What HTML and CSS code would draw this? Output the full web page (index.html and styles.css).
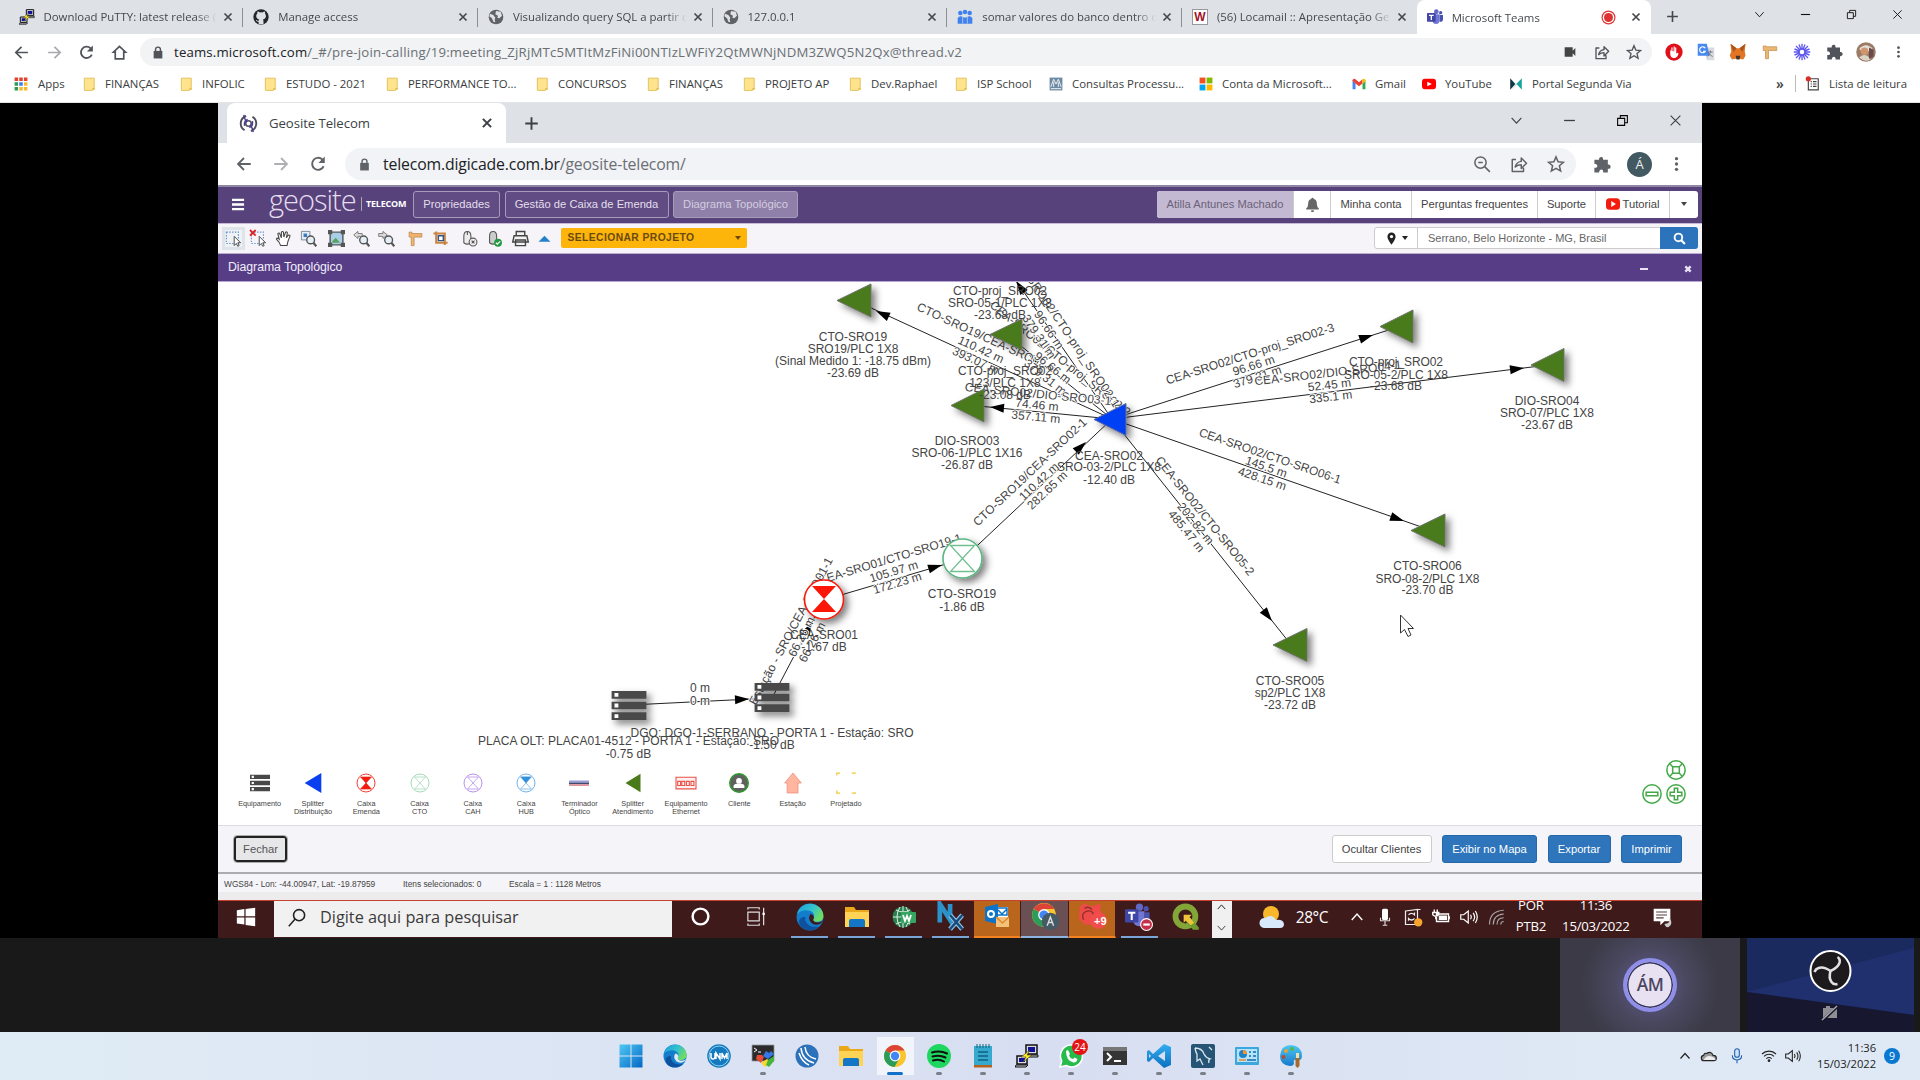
FILE: index.html
```html
<!DOCTYPE html>
<html lang="pt-BR">
<head>
<meta charset="utf-8">
<title>Microsoft Teams</title>
<link rel="stylesheet" href="styles.css">
</head>
<body>
<svg class="defs" aria-hidden="true">
<defs>
<linearGradient id="gWin" x1="0" y1="0" x2="1" y2="1"><stop offset="0" stop-color="#4fc8f5"/><stop offset="1" stop-color="#0467c4"/></linearGradient>
<linearGradient id="gEdge" x1="0" y1="0" x2="1" y2=".5"><stop offset="0" stop-color="#1b9de2"/><stop offset=".6" stop-color="#35c3c9"/><stop offset="1" stop-color="#6fdc62"/></linearGradient>
<linearGradient id="gCode" x1="0" y1="0" x2="0" y2="1"><stop offset="0" stop-color="#35aef0"/><stop offset="1" stop-color="#0b6fc0"/></linearGradient>
<linearGradient id="gPaint" x1="0" y1="0" x2="0" y2="1"><stop offset="0" stop-color="#4cc8f4"/><stop offset="1" stop-color="#1679c9"/></linearGradient>
<filter id="shadow" x="-40%" y="-40%" width="200%" height="200%"><feDropShadow dx="4" dy="4" stdDeviation="3.5" flood-opacity=".5"/></filter>
</defs>
<symbol id="x" viewBox="0 0 24 24"><path d="M5 5l14 14M19 5L5 19" fill="none" stroke="currentColor" stroke-width="3.4"/></symbol>
<symbol id="xthin" viewBox="0 0 24 24"><path d="M3 3l18 18M21 3L3 21" fill="none" stroke="currentColor" stroke-width="2"/></symbol>
<symbol id="plus" viewBox="0 0 24 24"><path d="M12 2v20M2 12h20" fill="none" stroke="currentColor" stroke-width="3"/></symbol>
<symbol id="minus" viewBox="0 0 24 24"><path d="M2 12h20" fill="none" stroke="currentColor" stroke-width="2.4"/></symbol>
<symbol id="restore" viewBox="0 0 24 24"><path d="M3 8h13v13H3zM8 8V3h13v13h-5" fill="none" stroke="currentColor" stroke-width="2"/></symbol>
<symbol id="down" viewBox="0 0 24 24"><path d="M3 7l9 10 9-10" fill="none" stroke="currentColor" stroke-width="2"/></symbol>
<symbol id="up" viewBox="0 0 24 24"><path d="M3 17l9-10 9 10" fill="none" stroke="currentColor" stroke-width="2.4"/></symbol>
<symbol id="back" viewBox="0 0 24 24"><path d="M21 12H4M12 4l-8 8 8 8" fill="none" stroke="currentColor" stroke-width="2.4"/></symbol>
<symbol id="fwd" viewBox="0 0 24 24"><path d="M3 12h17M12 4l8 8-8 8" fill="none" stroke="currentColor" stroke-width="2.4"/></symbol>
<symbol id="reload" viewBox="0 0 24 24"><path d="M19.5 15a8 8 0 1 1-1.8-9" fill="none" stroke="currentColor" stroke-width="2.6"/><path d="M21 2v8.500h-8.500z" fill="currentColor"/></symbol>
<symbol id="home" viewBox="0 0 24 24"><path d="M12 3.500L3.500 11.500H6V21h12v-9.500h2.500z" fill="none" stroke="currentColor" stroke-width="2.4"/></symbol>
<symbol id="lock" viewBox="0 0 24 24"><path d="M4 9h16v14H4z" fill="currentColor"/><path d="M7.500 10V6.500a4.500 4.500 0 0 1 9 0V10" fill="none" stroke="currentColor" stroke-width="2.600"/></symbol>
<symbol id="share" viewBox="0 0 24 24"><path d="M8 6H3v16h15v-5M7 16c1-5 4-7 8-7.500V4l7 7-7 7v-5c-4 0-6 1-8 3z" fill="none" stroke="currentColor" stroke-width="2" stroke-linejoin="round"/></symbol>
<symbol id="star" viewBox="0 0 24 24"><path d="M12 2.500l2.800 6.600 7.200.6-5.500 4.700 1.700 7L12 17.700l-6.200 3.700 1.700-7L2 9.700l7.200-.6z" fill="none" stroke="currentColor" stroke-width="2"/></symbol>
<symbol id="puzzle" viewBox="0 0 24 24"><path d="M3 6h6c-1-4 5-5 5-1v1h6v6c4-1 5 5 1 5.500h-1V22h-6c1-5-5-5-5 0H3v-6c5 1 5-5 0-5z" fill="currentColor"/></symbol>
<symbol id="dots" viewBox="0 0 24 24"><g fill="currentColor"><circle cx="12" cy="4" r="2.500"/><circle cx="12" cy="12" r="2.500"/><circle cx="12" cy="20" r="2.500"/></g></symbol>
<symbol id="globe" viewBox="0 0 24 24"><circle cx="12" cy="12" r="11" fill="#5f6368"/><path d="M3 7l5 2 3 4-1 3 1 4-3-1-2-5-4-3zM12 3l7 1 2 6-4 4-3-1 1-3-4-2z" fill="#dfe1e5"/></symbol>
<symbol id="folder" viewBox="0 0 24 24"><path d="M4 2h17v16l-2 1-1 4H4z" fill="#ffe38d" stroke="#dfbd55" stroke-width="1.500"/><path d="M19 19h3v3h-4z" fill="#e3b93d"/></symbol>
<symbol id="glass" viewBox="0 0 24 24"><circle cx="14" cy="9" r="7" fill="none" stroke="currentColor" stroke-width="2"/><path d="M9 14l-8 9" stroke="currentColor" stroke-width="2"/></symbol>
<symbol id="putty" viewBox="0 0 24 24"><path d="M11 1h11v9H11zM2 12h10v8H2z" fill="#ddd" stroke="#111" stroke-width="1.500"/><path d="M13 3h7v5h-7zM4 14h6v4H4z" fill="#10129b"/><path d="M1 21h12l-2 2H0zM11 11h12v2H12z" fill="#ccc" stroke="#111"/><path d="M15 6L6 13h5l-3 5 9-7h-5z" fill="#ffec20" stroke="#333" stroke-width=".6"/></symbol>
<symbol id="teams" viewBox="0 0 24 24"><circle cx="14" cy="4" r="3.500" fill="#6169c6"/><circle cx="20.500" cy="5.500" r="2.500" fill="#4a51b0"/><path d="M8 8h11v9a5.500 5.500 0 0 1-11 0z" fill="#7078d4"/><path d="M19 9h5v7a4 4 0 0 1-5 3z" fill="#4a51b0"/><rect x="0" y="6" width="13" height="13" rx="1" fill="#3f46a5"/><path d="M3 9.500h7M6.500 9.500v7" stroke="#fff" stroke-width="2"/></symbol>
<symbol id="edge" viewBox="0 0 24 24"><circle cx="12" cy="12" r="11.500" fill="#137dcc"/><path d="M1 9C3 2 9 0 14 .8c6 .9 10 6 9.500 11-.4 4-5 5-8 4-2-.8-1-2 0-4 1-5-8-8-14-2.800z" fill="url(#gEdge)"/><path d="M8 12c-1 5 4 10 12 8-4 4-11 4.500-15 1-4-4-3-9 3-9z" fill="#0e519f"/><path d="M12.500 9.500c3 .8 3.500 3 2.200 5 1.500 3 5.500 2.500 8.500.5-2 4-7.500 5-10.500 1.500-2-2.300-2-5-.2-7z" fill="#dfe9f5"/></symbol>
<symbol id="edgedark" viewBox="0 0 24 24"><circle cx="12" cy="12" r="11.500" fill="#137dcc"/><path d="M1 9C3 2 9 0 14 .8c6 .9 10 6 9.500 11-.4 4-5 5-8 4-2-.8-1-2 0-4 1-5-8-8-14-2.800z" fill="url(#gEdge)"/><path d="M8 12c-1 5 4 10 12 8-4 4-11 4.500-15 1-4-4-3-9 3-9z" fill="#0e519f"/><path d="M12.500 9.500c3 .8 3.500 3 2.200 5 1.500 3 5.500 2.500 8.500.5-2 4-7.500 5-10.500 1.500-2-2.300-2-5-.2-7z" fill="#3f1a1b"/></symbol>
<symbol id="chrome" viewBox="0 0 24 24"><circle cx="12" cy="12" r="11" fill="#fbc52d"/><path d="M12 12L2.500 6.500A11 11 0 0 1 21.500 6.500H12z" fill="#db4437"/><path d="M12 12L2.500 6.500A11 11 0 0 0 11.500 23L16 15z" fill="#2a9d58"/><circle cx="12" cy="12" r="5.400" fill="#fff"/><circle cx="12" cy="12" r="4.200" fill="#4285f4"/></symbol>
<symbol id="explorer" viewBox="0 0 24 24"><path d="M0 2h9l2 3h13v17H0z" fill="#e9a91b"/><path d="M0 7h24v15H0z" fill="#ffd355"/><path d="M4 22v-6a2 2 0 0 1 2-2h12a2 2 0 0 1 2 2v6z" fill="#1476c6"/></symbol>
<symbol id="win11" viewBox="0 0 24 24"><path d="M.5.500h11v11H.5zM12.500.500h11v11h-11zM.5 12.500h11v11H.5zM12.500 12.500h11v11h-11z" fill="url(#gWin)"/></symbol>
<symbol id="hour" viewBox="0 0 24 24"><circle cx="12" cy="12" r="10.800" fill="#fff" stroke="currentColor" stroke-width="1"/><path d="M5.500 4.800h13L12 12zM5.500 19.200h13L12 12z" stroke="currentColor" stroke-width=".8"/></symbol>
<symbol id="rack" viewBox="0 0 36 30"><g fill="#484848"><path d="M0 0h36v8H0zM0 11h36v8H0zM0 22h36v8H0z"/></g><path d="M3 2h4v4H3zM3 13h4v4H3zM3 24h4v4H3z" fill="#fff"/></symbol>
<symbol id="wifi" viewBox="0 0 24 24"><g fill="none" stroke="currentColor" stroke-width="1.700"><path d="M1.500 9a15 15 0 0 1 21 0M4.500 12.500a10.500 10.500 0 0 1 15 0M8 16a6 6 0 0 1 8 0"/></g><circle cx="12" cy="19" r="2" fill="currentColor"/></symbol>
<symbol id="sound" viewBox="0 0 24 24"><path d="M1 9h4l6-5v16l-6-5H1zM14 9q2 3 0 6M17.500 6.500q4 5.500 0 11M20.500 4q5 8 0 16" fill="none" stroke="currentColor" stroke-width="1.600"/></symbol>
<symbol id="sel" viewBox="0 0 24 24"><path d="M2 3h17v16H2z" fill="none" stroke="#5c93cb" stroke-width="1.600" stroke-dasharray="2 2"/><path d="M13 9v13l3-3 2 4 2-1-2-4h4z" fill="#fff" stroke="#444" stroke-width="1.300"/></symbol>
<symbol id="mag" viewBox="0 0 24 24"><circle cx="15" cy="14" r="5.500" fill="#e4f0f8" stroke="#555" stroke-width="2"/><path d="M19 18l4 5" stroke="#555" stroke-width="3"/></symbol>
</svg>

<header class="browser">
  <div class="tabs">
    <div class="tab"><svg><use href="#putty"/></svg><span>Download PuTTY: latest release (</span><svg class="close"><use href="#x"/></svg></div>
    <div class="tab"><svg viewBox="0 0 24 24"><circle cx="12" cy="12" r="11.500" fill="#23272c"/><path d="M8.500 23v-4c-3 .5-4-2-4.500-3 2 0 2 2.500 4.500 1.500.2-1 .5-1.400 1-1.800-5-1-6-6-3-9-.4-1 0-2 .3-3 1.500.2 2.500.7 3.500 1.500q2-.5 4 0c1-.8 2-1.300 3.500-1.500.3 1 .5 2 .2 3 3 4 1 8-3.200 9 1 1 1 2 1 7.300z" fill="#dee1e6"/></svg><span>Manage access</span><svg class="close"><use href="#x"/></svg></div>
    <div class="tab"><svg><use href="#globe"/></svg><span>Visualizando query SQL a partir d</span><svg class="close"><use href="#x"/></svg></div>
    <div class="tab"><svg><use href="#globe"/></svg><span>127.0.0.1</span><svg class="close"><use href="#x"/></svg></div>
    <div class="tab"><svg viewBox="0 0 24 24"><g fill="#3f82ee"><circle cx="5" cy="6" r="3.400"/><circle cx="12" cy="4.500" r="3.400"/><circle cx="19" cy="6" r="3.400"/><path d="M1 22v-8q2-4 5-3l6 2 6-2q3-1 5 3v8z"/></g><path d="M8.500 12v10M15.500 12v10" stroke="#dee1e6"/></svg><span>somar valores do banco dentro d</span><svg class="close"><use href="#x"/></svg></div>
    <div class="tab"><i class="fav-w">W</i><span>(56) Locamail :: Apresentação Ge</span><svg class="close"><use href="#x"/></svg></div>
    <div class="tab active"><svg><use href="#teams"/></svg><span>Microsoft Teams</span><i class="rec"></i><svg class="close"><use href="#x"/></svg></div>
    <svg class="newtab"><use href="#plus"/></svg>
    <div class="winctl"><svg><use href="#down"/></svg><svg><use href="#minus"/></svg><svg><use href="#restore"/></svg><svg><use href="#xthin"/></svg></div>
  </div>
  <div class="addr">
    <div class="nav"><svg><use href="#back"/></svg><svg class="dim"><use href="#fwd"/></svg><svg><use href="#reload"/></svg><svg><use href="#home"/></svg></div>
    <div class="omni"><svg class="lock"><use href="#lock"/></svg><p>teams.microsoft.com<span>/_#/pre-join-calling/19:meeting_ZjRjMTc5MTItMzFiNi00NTIzLWFiY2QtMWNjNDM3ZWQ5N2Qx@thread.v2</span></p>
      <svg viewBox="0 0 24 24"><path d="M4 5h12v5l4-4v12l-4-4v5H4z" fill="#444"/></svg><svg><use href="#share"/></svg><svg><use href="#star"/></svg></div>
    <div class="ext">
      <svg viewBox="0 0 24 24"><circle cx="12" cy="12" r="11.500" fill="#e0101b"/><path d="M7 9v6q0 4 4 5h2q4-1 5-6l-1-1-2 1V6h-1.500v5H13V4.500h-1.500V11H10V6H8.500v5z" fill="#fff"/></svg>
      <svg viewBox="0 0 24 24"><path d="M9 6h14v17H13z" fill="#d7dade"/><path d="M1 1h12l4 16H1z" fill="#4789ef"/><path d="M11 7a4 4 0 1 0 0 4H8" fill="none" stroke="#fff" stroke-width="1.600"/><path d="M14 12h7M18 10v2q-1 4-4 6M16 14q2 3 5 4" stroke="#666" fill="none"/></svg>
      <svg viewBox="0 0 24 24"><path d="M2 1l8 6h4l8-6-1 10 1 6-3 5-5-1H9l-5 1-3-5 2-6z" fill="#e27625"/><path d="M2 1l8 6-4 5zM22 1l-8 6 4 5z" fill="#a9541d"/><path d="M9 17h6l-1 5h-4z" fill="#463328"/></svg>
      <svg viewBox="0 0 24 24"><path d="M3 4h4v1h14v5H10v11H6V10H3z" fill="#eab676" stroke="#c78f4c"/></svg>
      <svg viewBox="0 0 24 24"><path d="M12 1v22M1 12h22M4 4l16 16M20 4L4 20M8 2l8 20M2 8l20 8M2 16l20-8M8 22l8-20" stroke="#5f57ee" stroke-width="1.800"/><circle cx="12" cy="12" r="4" fill="#fff" stroke="#5f57ee" stroke-width="2"/></svg>
      <svg class="gray"><use href="#puzzle"/></svg>
      <svg class="me" viewBox="0 0 24 24"><circle cx="12" cy="12" r="13" fill="#9c7c66"/><path d="M3 8q9-10 18 0l-3 3H6z" fill="#e5e2dc"/><circle cx="10" cy="11" r="5" fill="#cf9670"/><path d="M3 19q7-6 13 0l2 3q-8 4-14-2z" fill="#d8d4c8"/><path d="M16 6l6 3v9l-6 3z" fill="#6c4a4a"/></svg>
      <svg class="gray"><use href="#dots"/></svg>
    </div>
  </div>
  <div class="marks">
    <a class="m1"><svg viewBox="0 0 24 24"><path d="M1 1h6v6H1zM17 1h6v6h-6zM9 1h6v6H9z" fill="#e2412f"/><path d="M1 9h6v6H1zM1 17h6v6H1z" fill="#2d9b56"/><path d="M9 9h6v6H9z" fill="#3b7eea"/><path d="M17 9h6v6h-6zM9 17h6v6H9zM17 17h6v6h-6z" fill="#f4b92e"/></svg>Apps</a>
    <a class="m2"><svg><use href="#folder"/></svg>FINANÇAS</a>
    <a class="m3"><svg><use href="#folder"/></svg>INFOLIC</a>
    <a class="m4"><svg><use href="#folder"/></svg>ESTUDO - 2021</a>
    <a class="m5"><svg><use href="#folder"/></svg>PERFORMANCE TO...</a>
    <a class="m6"><svg><use href="#folder"/></svg>CONCURSOS</a>
    <a class="m7"><svg><use href="#folder"/></svg>FINANÇAS</a>
    <a class="m8"><svg><use href="#folder"/></svg>PROJETO AP</a>
    <a class="m9"><svg><use href="#folder"/></svg>Dev.Raphael</a>
    <a class="m10"><svg><use href="#folder"/></svg>ISP School</a>
    <a class="m11"><svg viewBox="0 0 24 24"><path d="M1 1h22v22H1z" fill="#6f8ba4"/><path d="M3 17L8 4l4 8 4-8 5 13M3 20h18M8 9v8M16 9v8" stroke="#fff" stroke-width="1.500" fill="none"/></svg>Consultas Processu...</a>
    <a class="m12"><svg viewBox="0 0 24 24"><path d="M1 1h10v10H1z" fill="#f25022"/><path d="M13 1h10v10H13z" fill="#7fba00"/><path d="M1 13h10v10H1z" fill="#00a4ef"/><path d="M13 13h10v10H13z" fill="#ffb900"/></svg>Conta da Microsoft...</a>
    <a class="m13"><svg viewBox="0 0 24 24"><path d="M1 5v16h5V11z" fill="#4285f4"/><path d="M23 5v16h-5V11z" fill="#34a853"/><path d="M1 5q2-3 5-1l6 5 6-5v7l-6 5-6-5-5-4z" fill="#ea4335"/><path d="M18 4q3-2 5 1v3l-5 3z" fill="#fbbc04"/></svg>Gmail</a>
    <a class="m14"><svg viewBox="0 0 24 24"><rect x="0" y="3" width="24" height="18" rx="5" fill="#f00"/><path d="M9 8v8l8-4z" fill="#fff"/></svg>YouTube</a>
    <a class="m15"><svg viewBox="0 0 24 24"><path d="M2 2l9 10-9 10z" fill="#143945"/><path d="M22 2v20l-9-10z" fill="#18a49a"/><path d="M5 22l17-20-9 10z" fill="#0c6a78"/></svg>Portal Segunda Via</a>
    <b>»</b>
    <a class="reading"><svg viewBox="0 0 24 24"><path d="M4 3h17v19H4zM8 8h2M12 8h6M8 12h2M12 12h6M8 16h2M12 16h6" fill="none" stroke="#444" stroke-width="2"/><circle cx="4" cy="3" r="4.500" fill="#d93025"/></svg>Lista de leitura</a>
  </div>
</header>

<main class="stage">
<section class="shared">
  <div class="itabs">
    <div class="itab"><svg viewBox="0 0 24 24"><path d="M9 2.500a10 10 0 0 0-2 18M15 21.500a10 10 0 0 0 2-18" fill="none" stroke="#4f4d5e" stroke-width="2.400"/><circle cx="12" cy="12" r="3.500" fill="none" stroke="#55516c" stroke-width="2"/><path d="M6 1q1 6 4 9M18 23q-1-6-4-9M7 15q-1-7 4-8M17 9q1 7-4 8" stroke="#4b3e8e" stroke-width="1.800" fill="none"/></svg><span>Geosite Telecom</span><svg class="close"><use href="#x"/></svg></div>
    <svg class="newtab"><use href="#plus"/></svg>
    <div class="iwin"><svg><use href="#down"/></svg><svg><use href="#minus"/></svg><svg class="blk"><use href="#restore"/></svg><svg><use href="#xthin"/></svg></div>
  </div>
  <div class="iaddr">
    <div class="inav"><svg><use href="#back"/></svg><svg class="dim"><use href="#fwd"/></svg><svg><use href="#reload"/></svg></div>
    <div class="iomni"><svg class="lock"><use href="#lock"/></svg><p>telecom.digicade.com.br<span>/geosite-telecom/</span></p>
      <svg viewBox="0 0 24 24"><circle cx="10" cy="10" r="7.500" fill="none" stroke="currentColor" stroke-width="2"/><path d="M15.500 15.500l7 7M7 10h6" stroke="currentColor" stroke-width="2"/></svg><svg><use href="#share"/></svg><svg><use href="#star"/></svg></div>
    <div class="iext"><svg><use href="#puzzle"/></svg><i>Á</i><svg><use href="#dots"/></svg></div>
  </div>
  <nav class="geo">
    <svg class="burger" viewBox="0 0 14 14"><path d="M0 2h13M0 7h13M0 12h13" stroke="#fff" stroke-width="2.600"/></svg>
    <div class="logo"><span>geosite</span><small>TELECOM</small></div>
    <a class="g1">Propriedades</a><a class="g2">Gestão de Caixa de Emenda</a><a class="g3">Diagrama Topológico</a>
    <div class="account">
      <span class="user">Atilla Antunes Machado</span>
      <span class="bell"><svg viewBox="0 0 24 24"><path d="M12 1q2 0 2 2 5 1 5 8 0 5 3 7v2H2v-2q3-2 3-7 0-7 5-8 0-2 2-2zM10 21h4v3h-4z" fill="#666"/></svg></span>
      <span class="a1">Minha conta</span><span class="a2">Perguntas frequentes</span><span class="a3">Suporte</span>
      <span class="a4"><svg viewBox="0 0 24 24"><rect x="0" y="2" width="24" height="20" rx="6" fill="#f31b10"/><path d="M9 7v10l8-5z" fill="#fff"/></svg>Tutorial</span>
      <span class="a5"><i class="caret"></i></span>
    </div>
  </nav>
  <div class="tools">
    <svg class="on"><use href="#sel"/></svg>
    <svg viewBox="0 0 24 24"><use href="#sel"/><path d="M0 0l8 8M8 0L0 8" stroke="#d22" stroke-width="2.500"/></svg>
    <svg viewBox="0 0 24 24"><path d="M8 22q-1-4-6-9 1-3 4 0L4 5q2-2 3 1l2 5V3q2-2 3 0l.5 7L15 3q2-1 2.500 1L16 11l3-4q3 0 2 2-2 5-3 8l-1 5z" fill="#fff" stroke="#444" stroke-width="1.500"/></svg>
    <svg viewBox="0 0 24 24"><path d="M2 2h12v12H2z" fill="#e5eef8" stroke="#567" /><path d="M5 5h5v5H5z" fill="#3b7ac0"/><use href="#mag"/></svg>
    <svg class="gap" viewBox="0 0 24 24"><path d="M3 3h18v18H3z" fill="#a9cfe8" stroke="#555" stroke-width="2"/><path d="M6 16l5-5 6 7H6z" fill="#5aa260"/><path d="M0 0h6v6H0zM18 0h6v6h-6zM0 18h6v6H0zM18 18h6v6h-6z" fill="#555"/></svg>
    <svg viewBox="0 0 24 24"><use href="#mag"/><path d="M1 7l6-5v3h6v4H7v3z" fill="#ddd" stroke="#555"/></svg>
    <svg viewBox="0 0 24 24"><use href="#mag"/><path d="M13 7L7 2v3H1v4h6v3z" fill="#ddd" stroke="#555"/></svg>
    <svg class="bar" viewBox="0 0 24 24"><path d="M3 3h4v2h14v5H10v12H6V10H3z" fill="#eeb571" stroke="#b97f40"/></svg>
    <svg viewBox="0 0 24 24"><path d="M2 5h16v16M6 2v16h16" fill="none" stroke="#c98442" stroke-width="3"/><path d="M9 8h7v7H9z" fill="#fff" stroke="#358" stroke-width="2"/></svg>
    <svg class="bar" viewBox="0 0 24 24"><path d="M4 18V9q0-7 5-7t5 7v9q-5 4-10 0zM9 2v5" fill="#ececec" stroke="#555" stroke-width="1.500"/><circle cx="17" cy="17" r="5.500" fill="#f2f2f2" stroke="#555" stroke-width="1.500"/><path d="M15 15l4 4M19 15l-4 4" stroke="#555" stroke-width="1.500"/></svg>
    <svg viewBox="0 0 24 24"><path d="M5 18V9q0-7 5-7t5 7v9q-5 4-10 0z" fill="#ccc" stroke="#555" stroke-width="1.500"/><circle cx="17" cy="18" r="5.500" fill="#249844"/><path d="M14 18l2 2 4-4" fill="none" stroke="#fff" stroke-width="1.600"/></svg>
    <svg viewBox="0 0 24 24"><path d="M6 8V2h12v6M3 8h18l2 9H1zM5 14h14v8H5z" fill="#f2f2f2" stroke="#444" stroke-width="2"/></svg>
    <svg class="tri" viewBox="0 0 24 24"><path d="M1 18L12 7l11 11z" fill="#2482cc"/></svg>
    <div class="project">SELECIONAR PROJETO<i class="caret"></i></div>
    <div class="place"><span class="pin"><svg viewBox="0 0 24 24"><path d="M12 1a7.500 7.500 0 0 1 7.500 8q0 4-7.500 14.500Q4.500 13 4.500 9A7.500 7.500 0 0 1 12 1z" fill="#222"/><circle cx="12" cy="8.500" r="3" fill="#fff"/></svg><i class="caret"></i></span><span class="where">Serrano, Belo Horizonte - MG, Brasil</span><span class="go"><svg viewBox="0 0 24 24"><circle cx="10" cy="10" r="7" fill="none" stroke="#fff" stroke-width="3.500"/><path d="M15 15l7 7" stroke="#fff" stroke-width="4"/></svg></span></div>
  </div>
  <div class="dialog-head"><span>Diagrama Topológico</span><i></i><svg viewBox="0 0 24 24"><path d="M4 4l16 16M20 4L4 20" stroke="#e9e2f5" stroke-width="7"/></svg></div>
  <div class="canvas">
    <svg class="graph" viewBox="218 282 1484 543">
      <g class="wires"><path d="M1112 419L856 301M1112 419L1006 334M1112 419L1010 272M1112 419L968 405M963 559L1112 419M1112 419L1398 327M1112 419L1548 365M1112 419L1430 530M1112 419L1292 646M824 600L963 559M630 705L772 698M772 698L824 599"/></g>
      <g class="heads">
        <path d="M0 0l-14-4.500 0 9z" transform="translate(876 311) rotate(204.700)"/>
        <path d="M0 0l-14-4.500 0 9z" transform="translate(1028 353) rotate(219)"/>
        <path d="M0 0l-14-4.500 0 9z" transform="translate(1016 281) rotate(235)"/>
        <path d="M0 0l-14-4.500 0 9z" transform="translate(990 407) rotate(185.500)"/>
        <path d="M0 0l-14-4.500 0 9z" transform="translate(1086 442) rotate(-43)"/>
        <path d="M0 0l-14-4.500 0 9z" transform="translate(1373 335) rotate(-17.900)"/>
        <path d="M0 0l-14-4.500 0 9z" transform="translate(1524 368) rotate(-7)"/>
        <path d="M0 0l-14-4.500 0 9z" transform="translate(1404 521) rotate(19.200)"/>
        <path d="M0 0l-14-4.500 0 9z" transform="translate(1272 621) rotate(51.600)"/>
        <path d="M0 0l-14-4.500 0 9z" transform="translate(942 565) rotate(-16.500)"/>
        <path d="M0 0l-14-4.500 0 9z" transform="translate(749 699) rotate(-3)"/>
        <path d="M0 0l-14-4.500 0 9z" transform="translate(812 622) rotate(-62)"/>
      </g>
      <g class="elabel">
        <g transform="translate(983 345) rotate(24.700)"><text y="-4" textLength="151">CTO-SRO19/CEA-SRO02-2</text><text y="9">110.42 m</text><text y="21">393.07 m</text></g>
        <g transform="translate(1059 360) rotate(38.700)"><text y="2" textLength="176">CEA-SRO02/CTO-proj_SRO02-2</text><text y="14">96.66 m</text><text y="26">379.31 m</text></g>
        <g transform="translate(1060 332) rotate(56)"><text y="-2" textLength="186">CEA-SRO02/CTO-proj_SRO02-1</text><text y="12" x="-8">96.66 m</text><text y="24" x="-8">379.31 m</text></g>
        <g transform="translate(1038 395) rotate(5.500)"><text y="3" textLength="147">CEA-SRO02/DIO-SRO03-1</text><text y="14">74.46 m</text><text y="26">357.11 m</text></g>
        <g transform="translate(1030 472) rotate(-43.300)"><text y="4" textLength="151">CTO-SRO19/CEA-SRO02-1</text><text y="17">110.42 m</text><text y="29">282.65 m</text></g>
        <g transform="translate(1250 354) rotate(-17.700)"><text y="4" textLength="176">CEA-SRO02/CTO-proj_SRO02-3</text><text y="16">96.66 m</text><text y="28">379.31 m</text></g>
        <g transform="translate(1328 373) rotate(-6.500)"><text y="4" textLength="148">CEA-SRO02/DIO-SRO04-1</text><text y="16">52.45 m</text><text y="28">335.1 m</text></g>
        <g transform="translate(1270 456) rotate(18.800)"><text y="4" textLength="149">CEA-SRO02/CTO-SRO06-1</text><text y="15.500">145.5 m</text><text y="28">428.15 m</text></g>
        <g transform="translate(1205 516) rotate(51)"><text y="4" textLength="149">CEA-SRO02/CTO-SRO05-2</text><text y="16">202.82 m</text><text y="28">485.47 m</text></g>
        <g transform="translate(890 559) rotate(-16.800)"><text y="4" textLength="149">CEA-SRO01/CTO-SRO19-1</text><text y="17">105.97 m</text><text y="29">172.23 m</text></g>
        <g transform="translate(791 631) rotate(-62)"><text y="4" textLength="165">Estação - SRO/CEA-SRO01-1</text><text y="16">66.26 m</text><text y="28">66.26 m</text></g>
        <g transform="translate(700 688)"><text y="4">0 m</text><text y="16.500">0 m</text></g>
      </g>
      <g class="nodes">
        <path d="M837 300.500L871 284v33zM990 334.500l32-15.500v31zM951 405.500l33-16.500v33zM1380 326.500l33-16.500v33zM1531 365l33-16.500v33zM1411 530.500l34-16.500v33zM1273 645l34-16.500v33z" class="leaf"/>
        <path d="M1094 419.500l32-16v32z" class="hub"/>
        <g filter="url(#shadow)"><use href="#rack" x="611" y="691" width="36" height="29"/><use href="#rack" x="754" y="683" width="36" height="29"/></g>
        <g filter="url(#shadow)"><circle cx="824" cy="599.500" r="19.500" fill="#fff" stroke="#f31b10" stroke-width="1.600"/><circle cx="962.500" cy="558.500" r="19.500" fill="#fff" stroke="#5cb583" stroke-width="1.600"/></g>
        <path d="M812 586h24l-12 13 12 13h-24l12-13z" fill="#fb1607"/><path d="M950.500 545.500h24l-12 13 12 13h-24l12-13z" fill="none" stroke="#6fbf90" stroke-width="1.300"/>
      </g>
      <g class="nlabel">
        <text x="853" y="341">CTO-SRO19</text><text x="853" y="353">SRO19/PLC 1X8</text><text x="853" y="365" textLength="156">(Sinal Medido 1: -18.75 dBm)</text><text x="853" y="376.500">-23.69 dB</text>
        <text x="1000" y="295" textLength="94">CTO-proj_SRO02</text><text x="1000" y="307" textLength="104">SRO-05-1/PLC 1X8</text><text x="1000" y="319">-23.68 dB</text>
        <text x="1005" y="375" textLength="94">CTO-proj_SRO02</text><text x="1005" y="387">123/PLC 1X8</text><text x="1005" y="399">-23.08 dB</text>
        <text x="967" y="445">DIO-SRO03</text><text x="967" y="457" textLength="111">SRO-06-1/PLC 1X16</text><text x="967" y="469">-26.87 dB</text>
        <text x="1109" y="460">CEA-SRO02</text><text x="1109" y="471" textLength="104">SRO-03-2/PLC 1X8</text><text x="1109" y="484">-12.40 dB</text>
        <text x="1396" y="366" textLength="94">CTO-proj_SRO02</text><text x="1396" y="378.500" textLength="104">SRO-05-2/PLC 1X8</text><text x="1396" y="390">-23.68 dB</text>
        <text x="1547" y="405">DIO-SRO04</text><text x="1547" y="416.500" textLength="94">SRO-07/PLC 1X8</text><text x="1547" y="429">-23.67 dB</text>
        <text x="1427.500" y="570">CTO-SRO06</text><text x="1427.500" y="582.500" textLength="104">SRO-08-2/PLC 1X8</text><text x="1427.500" y="594">-23.70 dB</text>
        <text x="1290" y="685">CTO-SRO05</text><text x="1290" y="697">sp2/PLC 1X8</text><text x="1290" y="708.500">-23.72 dB</text>
        <text x="962" y="598">CTO-SRO19</text><text x="962" y="610.500">-1.86 dB</text>
        <text x="824" y="639">CEA-SRO01</text><text x="824" y="650.500">-1.67 dB</text>
        <text x="772" y="737" textLength="283">DGO: DGO-1-SERRANO - PORTA 1 - Estação: SRO</text><text x="772" y="749">-1.50 dB</text>
        <text x="628.500" y="745" textLength="301">PLACA OLT: PLACA01-4512 - PORTA 1 - Estação: SRO</text><text x="628.500" y="757.500">-0.75 dB</text>
      </g>
      <path d="M1400.500 615v18l4-3.500 3.500 7 3-1.500-3-6.500h5.500z" fill="#fff" stroke="#333"/>
    </svg>
    <ul class="legend">
      <li><svg><use href="#rack"/></svg>Equipamento</li>
      <li><svg viewBox="0 0 24 24"><path d="M2 12L22 0v24z" fill="#0a3ff0"/></svg>Splitter<br>Distribuição</li>
      <li><svg color="#f21c0d" fill="#f21c0d"><use href="#hour"/></svg>Caixa<br>Emenda</li>
      <li><svg color="#93d3ab" fill="none"><use href="#hour"/></svg>Caixa<br>CTO</li>
      <li><svg color="#a97be8" fill="none"><use href="#hour"/></svg>Caixa<br>CAH</li>
      <li><svg viewBox="0 0 24 24" color="#58a3e2" fill="none"><use href="#hour"/><path d="M5.500 4.500h13L12 12z" fill="#348fdb"/></svg>Caixa<br>HUB</li>
      <li><svg viewBox="0 0 24 24"><path d="M0 9h24v2.500H0z" fill="#9a9ad8"/><path d="M0 11.500h24v2H0z" fill="#3f4a72"/><path d="M0 13.500h24v2H0z" fill="#e08a92"/></svg>Terminador<br>Óptico</li>
      <li><svg viewBox="0 0 24 24"><path d="M3 12L21 1v22z" fill="#4b7a1d"/></svg>Splitter<br>Atendimento</li>
      <li><svg viewBox="0 0 24 24"><path d="M0 5h24v14H0zM2 10h3.500v5H2zM7 10h3.500v5H7zM12.500 10H16v5h-3.500zM18 10h3.500v5H18z" fill="#fff1f0" stroke="#ea5149" stroke-width="1.300"/></svg>Equipamento<br>Ethernet</li>
      <li><svg viewBox="0 0 24 24"><circle cx="12" cy="12" r="11" fill="#606060" stroke="#329532" stroke-width="2"/><circle cx="12" cy="9.500" r="3.500" fill="#fff"/><path d="M5.500 18v-2q0-3 4-3h5q4 0 4 3v2z" fill="#fff"/></svg>Cliente</li>
      <li><svg viewBox="0 0 24 24"><path d="M12 0l10 12h-4v12H5V12H2z" fill="#ffb5a0" stroke="#ed9080"/></svg>Estação</li>
      <li><svg viewBox="0 0 24 24"><path d="M1 3V0h4M19 0h4v1M1 21v3h4M23 23v1h-4" fill="none" stroke="#edc936" stroke-width="1.500"/></svg>Projetado</li>
    </ul>
    <div class="zoomers">
      <svg viewBox="0 0 24 24"><circle cx="12" cy="12" r="11"/><path d="M8 8h8v8H8zM8 8L4 4M16 8l4-4M8 16l-4 4M16 16l4 4"/></svg>
      <div><svg viewBox="0 0 24 24"><circle cx="12" cy="12" r="11"/><path d="M5 10h14v4H5z"/></svg><svg viewBox="0 0 24 24"><circle cx="12" cy="12" r="11"/><path d="M10 5h4v5h5v4h-5v5h-4v-5H5v-4h5z"/></svg></div>
    </div>
  </div>
  <div class="actions"><button class="fechar">Fechar</button><button class="b1">Ocultar Clientes</button><button class="b2">Exibir no Mapa</button><button class="b3">Exportar</button><button class="b4">Imprimir</button></div>
  <div class="status"><span class="s1">WGS84 - Lon: -44.00947, Lat: -19.87959</span><span class="s2">Itens selecionados: 0</span><span class="s3">Escala = 1 : 1128 Metros</span></div>
  <div class="w10">
    <div class="start"><svg viewBox="0 0 24 24"><path d="M1 4l9-1.500V11H1zM11.500 2.300L23 1v10H11.500zM1 12.500h9v8.500L1 19.700zM11.500 12.500H23V23l-11.500-1.500z" fill="#fff"/></svg></div>
    <div class="search"><svg><use href="#glass"/></svg>Digite aqui para pesquisar</div>
    <div class="wide"><svg viewBox="0 0 24 24"><circle cx="12" cy="12" r="9" fill="none" stroke="#fff" stroke-width="2.800"/></svg></div>
    <div class="wide"><svg viewBox="0 0 24 24"><path d="M1 7h13v10H1zM1 4V2h13v2M1 20v2h13v-2M19 2v20" fill="none" stroke="#ddd" stroke-width="1.400"/><circle cx="19" cy="9" r="1.500" fill="#fff"/></svg></div>
    <div class="app run"><svg class="big"><use href="#edgedark"/></svg></div>
    <div class="app run"><svg><use href="#explorer"/></svg></div>
    <div class="app run"><svg viewBox="0 0 24 24"><circle cx="11" cy="12" r="10.500" fill="#2b8050"/><path d="M1 12h20M11 1v22M4 5q7 4 14 0M4 19q7-4 14 0M8 2q-6 10 0 20M14 2q6 10 0 20" stroke="#d7efe0" fill="none"/><rect x="9" y="7" width="15" height="11" rx="1" fill="#37a562"/><path d="M11 10l2 6 2-5 2 5 2-6" stroke="#fff" fill="none" stroke-width="1.800"/></svg></div>
    <div class="app run"><svg viewBox="0 0 30 28" class="big"><path d="M3 20V0l11 17V0" stroke="#2b93c9" stroke-width="5" fill="none"/><path d="M14 12l13 15M27 12L14 27" stroke="#88c8ef" stroke-width="5"/><path d="M14 12l13 15M27 12L14 27" stroke="#1d4a78" stroke-width="2.500"/></svg></div>
    <div class="app o"><svg viewBox="0 0 24 24"><path d="M10 3h13v14H10z" fill="#fff"/><path d="M0 3l13-3v20L0 17z" fill="#0b74c8"/><circle cx="6" cy="10" r="3" fill="none" stroke="#fff" stroke-width="2"/><path d="M13 4h9v7h-9M13 6l4 4 5-5" fill="none" stroke="#0b74c8" stroke-width="1.500"/><path d="M11 13h13v10H11z" fill="#f4c27a"/><path d="M11 13l6.500 6 6.500-6" fill="none" stroke="#d98a32" stroke-width="1.500"/></svg></div>
    <div class="app g"><svg viewBox="0 0 26 26" class="big"><use href="#chrome" width="24" height="24"/><circle cx="18" cy="18" r="8" fill="#455a64"/><path d="M15 22l3-8 3 8M16 19h4" stroke="#ddd" fill="none" stroke-width="1.300"/></svg></div>
    <div class="app o"><svg viewBox="0 0 30 28" class="big"><path d="M2 4l5-4 5 3h6l6-3v8l3 5-3 10H7l-6-6z" fill="#ee4b48"/><path d="M6 18q-3-7 3-9t8 4M7 6q4-3 8 1" fill="none" stroke="#8e302b" stroke-width="1.500"/><circle cx="22" cy="19" r="9" fill="#f14d4d"/></svg><em>+9</em></div>
    <div class="app run"><svg viewBox="0 0 26 26" class="big"><use href="#teams" width="23" height="23"/><circle cx="20" cy="20" r="5.500" fill="#c4314b" stroke="#fff"/><path d="M17 20h6" stroke="#fff" stroke-width="2"/></svg></div>
    <div class="app"><svg viewBox="0 0 24 24" class="big"><circle cx="11.500" cy="11.500" r="8.500" fill="none" stroke="#82a637" stroke-width="5"/><path d="M11 11l5 2 7 8v2h-5l-6-7z" fill="#6f9b31"/><path d="M10 10h7l-2 2 4 5-3 2-4-4-2 2z" fill="#f0c33b"/></svg></div>
    <div class="scroll"><svg><use href="#up"/></svg><svg><use href="#down"/></svg></div>
    <div class="sun"><svg viewBox="0 0 24 24"><circle cx="10" cy="9" r="8" fill="#f8b82c"/><path d="M3 23a5 5 0 0 1 1-10q7-5 11 2 7-1 8 4 0 4-4 4z" fill="#d7e9fb"/></svg></div><div class="temp">28°C</div>
    <div class="tray">
      <svg><use href="#up"/></svg>
      <svg viewBox="0 0 24 24"><rect x="8" y="1" width="8" height="15" rx="2" fill="#fff"/><path d="M6 13v4h12v-4M12 17v6M9 23h6" fill="none" stroke="#ddd" stroke-width="1.500"/></svg>
      <svg viewBox="0 0 24 24"><path d="M2 4l16-2v20H2zM18 2h4" fill="none" stroke="#eee" stroke-width="1.600"/><path d="M6 9q4-4 8 0v-3M14 14q-4 4-8 0v3" fill="none" stroke="#eee" stroke-width="1.600"/><circle cx="19" cy="19" r="5.500" fill="#f7a52c"/></svg>
      <svg viewBox="0 0 24 24"><path d="M6 8h16v10H6zM23 11v4M3 2v4M7 2v4M1 6h8v3q-4 4-8 0zM5 11v4" fill="none" stroke="#fff" stroke-width="1.800"/><path d="M9 10h11v6H9z" fill="#fff"/></svg>
      <svg><use href="#sound"/></svg>
      <svg viewBox="0 0 24 24"><g fill="none" stroke="#aaa" stroke-width="1.500"><path d="M2 22Q2 4 21 3M7 22Q7 9 21 8M12 22q0-9 9-9M17 22q0-4 4-4"/></g></svg>
    </div>
    <div class="two lang"><span>POR</span><span>PTB2</span></div>
    <div class="two clock"><span>11:36</span><span>15/03/2022</span></div>
    <div class="note"><svg viewBox="0 0 24 24"><path d="M2 2h20v15h-7l-5 5v-5H2z" fill="#fff"/><path d="M5 6h13M5 9.500h13M5 13h9" stroke="#5a3c3c" stroke-width="1.300"/><path d="M15 20q7 1 6-7 5 8-1 11-4 1-5-4z" fill="#ccc"/></svg></div>
  </div>
</section>
<aside class="people">
  <div class="tile p1"><i>ÁM</i></div>
  <div class="tile p2">
    <svg viewBox="0 0 167 94"><path d="M0 0h167v94H0z" fill="#1b2a5e"/><path d="M0 54L167 10v67z" fill="#20306f"/><path d="M0 54l167 23v17H0z" fill="#17182f"/>
      <circle cx="83.500" cy="33" r="20" fill="#1d1a1e" stroke="#fff" stroke-width="2"/><path d="M83.500 33q7-3 9-8 1-4-2-6M83.500 33q-7-5-12-3-3 1-4 4M83.500 33q-2 7 1 11 2 3 6 2" fill="none" stroke="#e2e0e2" stroke-width="2.600"/><path d="M76 70h14v10H76zM79 68h4v3h-4z" fill="#8f8f93"/><path d="M76 82l15-14" stroke="#17182f" stroke-width="3"/><path d="M75 82l15-14" stroke="#aaa" stroke-width="1.400"/></svg>
  </div>
</aside>
</main>

<footer class="w11">
  <div class="dock">
    <a><svg><use href="#win11"/></svg></a>
    <a><svg><use href="#edge"/></svg></a>
    <a><svg viewBox="0 0 24 24"><circle cx="12" cy="12" r="11.800" fill="#1479bd"/><circle cx="12" cy="12" r="10" fill="none" stroke="#8fd0f2"/><path d="M4 9v4q0 2 2 2t2-2V9v6M9 15V9l4 6V9M15 15V9l2.500 5L20 9v6" fill="none" stroke="#fff" stroke-width="1.500"/></svg></a>
    <a class="dot"><svg viewBox="0 0 24 24"><path d="M1 1h22v16H1z" fill="#2b2b2e" stroke="#999" stroke-width=".8"/><path d="M3 4l3 2-3 2M7 8h3" stroke="#fff" fill="none"/><path d="M6 11l5 0 2 2-3 6-5-4z" fill="#e84b35"/><path d="M12 12l3-5 3 2 2-2 3 3-6 5z" fill="#3578e5"/><path d="M10 19l6-4 4 3-6 5z" fill="#f7d82c"/><path d="M17 16l6-4v5l-5 6-3-2z" fill="#46b53d"/></svg></a>
    <a><svg viewBox="0 0 24 24"><circle cx="12" cy="12" r="11.500" fill="#2c72bb"/><path d="M6 4q1 12 13 15M10 3q1 10 11 12M4 9q3 9 10 12" fill="none" stroke="#fff" stroke-width="1.500"/></svg></a>
    <a><svg><use href="#explorer"/></svg></a>
    <a class="on"><svg><use href="#chrome"/></svg></a>
    <a class="dot"><svg viewBox="0 0 24 24"><circle cx="12" cy="12" r="12" fill="#1ed760"/><path d="M5 8.500q8-2.500 15 1M5.500 12.500q7-2 13 1M6 16.500q6-2 11 1" fill="none" stroke="#111" stroke-width="2" stroke-linecap="round"/></svg></a>
    <a class="dot"><svg viewBox="0 0 24 24"><path d="M3 2h18v20H3z" fill="#35a9ce"/><path d="M3 21h18v2.500H3z" fill="#b3611d"/><path d="M7 8h10M7 12h10M7 16h10" stroke="#0f607f" stroke-width="1.600"/><path d="M6 0v4M9 0v4M12 0v4M15 0v4M18 0v4" stroke="#14627c"/></svg></a>
    <a class="dot"><svg><use href="#putty"/></svg></a>
    <a class="dot"><svg viewBox="0 0 24 24"><path d="M1 23l1.700-6A11 11 0 1 1 7 21.500z" fill="#26bb4b" stroke="#fff" stroke-width="1.600"/><path d="M7 7l2-1 2 4-1 1.500q1 3 4 3.500l1.500-1.500 3 1.500q-1 4-4 3.500Q7 17 7 7z" fill="#fff"/></svg><em>24</em></a>
    <a class="dot"><svg viewBox="0 0 24 24"><path d="M0 3h24v18H0z" fill="#353535"/><path d="M0 3h24v4H0z" fill="#777"/><path d="M4 9l4 4-4 4M11 17h7" fill="none" stroke="#fff" stroke-width="2"/></svg></a>
    <a class="dot"><svg viewBox="0 0 24 24"><path d="M17 0l7 3v18l-7 3L6 14l-4 4-2-1V7l2-1 4 4zM18 7l-7 5 7 5zM2 10v4l2-2z" fill="url(#gCode)" fill-rule="evenodd"/></svg></a>
    <a class="dot"><svg viewBox="0 0 24 24"><rect width="24" height="24" rx="2" fill="#255474"/><path d="M4 4q7 0 9 6 2 4 6 5-2 1-1 4M4 4q1 5 2 6v7l3-2 3 6M18 3l3 3" fill="none" stroke="#d7e6ee" stroke-width="1.300"/></svg></a>
    <a class="dot"><svg viewBox="0 0 24 24"><rect y="3" width="24" height="18" rx="1" fill="#3ba7dd"/><path d="M2 5h20v13H2z" fill="#b4e4fa"/><circle cx="8" cy="10" r="4" fill="#1f82c7"/><path d="M8 10V6a4 4 0 0 1 4 4z" fill="#f7932f"/><path d="M14 8h2M14 12h2M18 8h3M18 12h3M12 16h9" stroke="#176aa8" stroke-width="1.500"/><path d="M4 16h7" stroke="#ed8a30" stroke-width="1.500"/></svg></a>
    <a class="dot"><svg viewBox="0 0 24 24"><path d="M12 1q11 1 11 11 0 5-5 4-4-1-3 3 0 3-4 3Q1 21 1 12 2 1 12 1z" fill="url(#gPaint)"/><circle cx="4.500" cy="13" r="2" fill="#b64e35"/><circle cx="7" cy="7" r="2" fill="#e6a42d"/><circle cx="13" cy="5" r="2" fill="#56b44b"/><path d="M17 9h3v6h-3z" fill="#f3dfa9"/><path d="M16.500 14h4v8l-2 2-2-2z" fill="#a56a2e"/></svg></a>
  </div>
  <div class="systray">
    <svg class="y1"><use href="#up"/></svg>
    <svg class="y2" viewBox="0 0 24 24"><path d="M5 19a4 4 0 0 1-1-8q1-4 5-3 6-4 9 3 5 0 5 4 0 4-4 4z" fill="#999" stroke="#222" stroke-width="1.700"/><path d="M4 18q4-8 13-5 4 1 5 5z" fill="#eee"/></svg>
    <svg class="y3" viewBox="0 0 24 24"><rect x="8.500" y="1" width="7" height="13" rx="3.500" fill="#cde3f7" stroke="#1f5fae" stroke-width="1.600"/><path d="M5 11q0 7 7 7t7-7M12 18v5" fill="none" stroke="#1f5fae" stroke-width="1.600"/></svg>
    <svg class="y4"><use href="#wifi"/></svg>
    <svg class="y5"><use href="#sound"/></svg>
    <div class="when"><span>11:36</span><span>15/03/2022</span></div>
    <i>9</i>
  </div>
</footer>
</body>
</html>
```
FILE: styles.css
```css
* { box-sizing: border-box; }
html, body { margin: 0; height: 1080px; overflow: hidden; }
body { width: 1920px; background: #000; font-family: "Open Sans", "Noto Sans", sans-serif; color: #333; display: flex; flex-direction: column; }
svg { display: block; flex: none; overflow: visible; }
i, em { font-style: normal; }
p, ul { margin: 0; padding: 0; }
span, a, p, b, div { white-space: nowrap; }
.defs { width: 0; height: 0; position: absolute; }

/* outer browser */
.browser { height: 103px; background: #fff; border-bottom: 1px solid #e3e4e6; }
.tabs { height: 34px; background: #dee1e6; display: flex; align-items: center; padding: 0 0 1px 8.500px; font-size: 11.400px; color: #45494d; }
.tab { width: 234.700px; height: 34px; display: flex; align-items: center; padding: 0 9px 0 10px; position: relative; }
.tab:not(.active)::after { content: ""; position: absolute; right: 0; top: 8px; height: 19px; border-right: 1px solid #8b8f94; }
.tab:nth-child(6)::after { display: none; }
.tab > svg { width: 16px; height: 16px; }
.tab > span { flex: 1; margin: 0 5px 0 9px; overflow: hidden; -webkit-mask-image: linear-gradient(90deg, #000 88%, transparent); }
.tab > svg.close { width: 12px; height: 12px; }
.tab.active { background: #fff; border-radius: 8px 8px 0 0; margin-bottom: -1px; }
.fav-w { width: 16px; height: 16px; background: #fff; border: 1px solid #999; color: #a11225; font: bold 12px/14px "Liberation Sans", sans-serif; text-align: center; }
.tab > .rec { width: 9px; height: 9px; border-radius: 50%; background: #d33; box-shadow: 0 0 0 1.300px #fff, 0 0 0 2.500px #d33; margin-right: 17px; }
.tabs > .newtab { width: 13px; height: 13px; margin-left: 15px; }
.winctl { margin-left: auto; display: flex; gap: 35px; padding: 0 17px 4px 0; color: #111; }
.winctl svg { width: 11px; height: 11px; }
.addr { height: 36px; display: flex; align-items: center; color: #50545a; }
.nav { width: 140px; display: flex; gap: 15.500px; padding-left: 13px; }
.nav svg { width: 17px; height: 17px; }
.dim { opacity: .5; }
.omni { width: 1512px; height: 28px; background: #f1f3f4; border-radius: 14px; display: flex; align-items: center; padding: 0 10px 0 11px; }
.omni p { flex: 1; font-size: 13.200px; letter-spacing: .18px; margin-left: 9px; color: #202124; }
.omni p span, .iomni p span { color: #6b6f74; }
.omni svg { width: 16px; height: 16px; margin-left: 16px; }
.omni .lock { width: 14px; height: 13px; margin: 0; }
.ext { display: flex; gap: 14px; padding-left: 13px; align-items: center; }
.ext svg { width: 18px; height: 18px; }
.ext svg:last-child { width: 13px; height: 14px; margin-left: 3px; }
.gray { color: #50545a; }
.marks { height: 27px; display: flex; align-items: center; padding-left: 14px; font-size: 11.400px; color: #3a3d40; }
.marks a { display: flex; align-items: center; flex: none; }
.marks svg { width: 14px; height: 14px; margin-right: 9px; }
.marks .m1 svg { margin-right: 10px; }
.m1 { width: 68px; } .m2 { width: 97px; } .m3 { width: 84px; } .m4 { width: 122px; } .m5 { width: 150px; } .m6 { width: 111px; }
.m7 { width: 96px; } .m8 { width: 106px; } .m9 { width: 106px; } .m10 { width: 95px; } .m11 { width: 150px; } .m12 { width: 153px; }
.m13 { width: 70px; } .m14 { width: 87px; } .m15 { width: 267px; }
.marks b { font-size: 14px; font-weight: 600; width: 19px; line-height: 20px; }
.reading { border-left: 1px solid #bbb; padding-left: 10px; height: 17px; }

/* call stage */
.stage { height: 929px; background: #000; display: flex; flex-direction: column; }
.shared { width: 1484px; height: 835px; margin-left: 218px; background: #fff; font-family: "Liberation Sans", Arial, sans-serif; display: flex; flex-direction: column; }
.itabs { height: 40px; background: #dee1e6; display: flex; align-items: center; padding-left: 9px; color: #3c3f43; font-family: "Open Sans", sans-serif; }
.itab { width: 279px; height: 40px; background: #fff; border-radius: 8px 8px 0 0; display: flex; align-items: center; padding: 0 12px; font-size: 13.200px; letter-spacing: -.07px; }
.itab svg { width: 19px; height: 19px; }
.itab span { flex: 1; margin-left: 11px; }
.itab .close { width: 14px; height: 14px; }
.itabs > .newtab { width: 15px; height: 15px; margin-left: 18px; }
.iwin { margin-left: auto; display: flex; gap: 40px; padding: 0 20px 6px 0; }
.iwin svg { width: 13px; height: 13px; }
.blk { color: #000; }
.iaddr { height: 42px; display: flex; align-items: center; color: #5f6368; font-family: "Open Sans", sans-serif; }
.inav { width: 127px; display: flex; gap: 19px; padding-left: 17px; }
.inav svg { width: 18px; height: 18px; }
.iomni { width: 1231px; height: 32px; border-radius: 16px; background: #f1f3f6; display: flex; align-items: center; padding: 0 11px 0 13px; }
.iomni p { flex: 1; margin-left: 12px; font-size: 15.800px; letter-spacing: -.16px; color: #202124; }
.iomni svg { width: 18px; height: 18px; margin-left: 19px; }
.iomni .lock { width: 13px; height: 13px; margin: 0; }
.iext { display: flex; align-items: center; padding-left: 16px; gap: 16px; }
.iext svg { width: 19px; height: 19px; }
.iext i { width: 25px; height: 25px; border-radius: 50%; background: #435962; color: #eee; font-size: 13px; line-height: 24px; text-align: center; }
.iext svg:last-child { width: 17px; height: 16px; }
.geo { height: 38px; background: #58427b; border-top: 2px solid #8f86a4; display: flex; align-items: center; font-size: 11.200px; color: #e4dfed; padding: 0 4px 2px 14px; }
.burger { width: 13px; height: 13px; }
.logo { width: 168px; display: flex; align-items: center; padding-left: 24px; }
.logo span { font: 300 29px/26px "Open Sans", sans-serif; letter-spacing: -1px; color: #e4ddef; margin-top: -8px; width: 92px; }
.logo small { font: bold 9px/14px "Open Sans", sans-serif; color: #fff; border-left: 1px solid #aaa; padding-left: 4px; letter-spacing: -.2px; }
.geo > a { height: 27px; line-height: 25px; border: 1px solid #a79bbb; border-radius: 3px; text-align: center; margin-right: 4.500px; background: #614c84; flex: none; }
.g1 { width: 87px; } .g2 { width: 164px; } .geo > .g3 { width: 125px; background: #8e80a8; color: #d5cde0; }
.account { margin-left: auto; display: flex; height: 27px; line-height: 27px; background: #fff; border-radius: 3px; overflow: hidden; color: #444; text-align: center; }
.account span { border-right: 1px solid #ccc; display: flex; align-items: center; justify-content: center; }
.account .user { width: 137px; background: #c4b9d2; color: #6a6278; }
.account .bell { width: 37px; } .bell svg { width: 15px; height: 15px; }
.account .a1 { width: 81px; } .account .a2 { width: 126px; } .account .a3 { width: 58px; } .account .a4 { width: 74px; gap: 3px; } .account .a5 { width: 28px; border: 0; }
.a4 svg { width: 14px; height: 14px; }
.caret { display: inline-block; border: 3.500px solid transparent; border-top: 4px solid currentColor; border-bottom: 0; }
.tools { height: 31px; background: #f6f4f8; border-top: 1px solid #c6b8d6; border-bottom: 1px solid #b9aecb; display: flex; align-items: center; padding: 0 4px 1px 2.500px; }
.tools > svg { width: 17px; height: 17px; margin: 0 4px; }
.tools > svg.on { outline: 3px solid #dfe3ea; background: #eef1f6; }
.tools > svg.gap { margin-left: 7px; }
.tools > svg.bar { margin-left: 8px; }
.tools > svg.tri { width: 13px; margin: 0 10px 0 5px; }
.tools > svg:nth-child(12) { margin: 0 4px 0 5px; }
.project { width: 186px; height: 20px; background: #fdb40b; border-radius: 2px; font: bold 10.300px/20px "Liberation Sans", sans-serif; letter-spacing: .42px; color: #6b4a10; display: flex; align-items: center; justify-content: space-between; padding: 0 6px 0 7px; }
.place { margin-left: auto; display: flex; height: 22px; font-size: 11px; color: #666; background: #fff; border: 1px solid #ccc; border-radius: 3px; }
.pin { width: 43px; border-right: 1px solid #ccc; display: flex; align-items: center; justify-content: center; gap: 4px; color: #222; }
.pin svg { width: 13px; height: 13px; }
.where { width: 243px; line-height: 20px; padding-left: 10px; }
.go { width: 38px; margin: -1px; background: #2b73ba; border-radius: 0 3px 3px 0; display: flex; align-items: center; justify-content: center; }
.go svg { width: 13px; height: 13px; }
.dialog-head { height: 28px; background: #563d86; border-bottom: 1px solid #b3a6d2; color: #f3effa; font-size: 12.300px; letter-spacing: -.05px; display: flex; align-items: center; padding: 0 10px 1px 10px; }
.dialog-head span { flex: 1; }
.dialog-head i { width: 8px; height: 2px; background: #e9e2f5; margin-right: 36px; margin-top: 4px; }
.dialog-head svg { width: 8px; height: 8px; margin-top: 3px; }

/* topology */
.canvas { height: 543px; position: relative; overflow: hidden; background: #fff; display: flex; align-items: flex-end; }
.graph { position: absolute; inset: 0; width: 1484px; height: 543px; overflow: hidden; }
.graph text { font-family: "Liberation Sans", Arial, sans-serif; font-size: 12px; text-anchor: middle; fill: #444; }
.elabel text { paint-order: stroke; stroke: #fff; stroke-width: 1.800px; }
.wires path { fill: none; stroke: #222; stroke-width: 1; }
.leaf { fill: #4a7a1c; stroke: #6c7268; stroke-width: 1; filter: url(#shadow); }
.hub { fill: #063ff5; stroke: #5a6a9a; stroke-width: 1; filter: url(#shadow); }
.legend { list-style: none; display: flex; height: 56px; padding-left: 15px; font-size: 7.300px; line-height: 7.800px; color: #444; position: relative; }
.legend li { width: 53.300px; text-align: center; }
.legend svg { width: 20px; height: 20px; margin: 4px auto 7px; }
.zoomers { position: relative; margin-left: auto; padding: 0 16px 21px 0; display: flex; flex-direction: column; align-items: flex-end; gap: 4px; }
.zoomers div { display: flex; gap: 4px; }
.zoomers svg { width: 20px; height: 20px; fill: none; stroke: #43a847; stroke-width: 1.800; }
.actions { height: 49px; background: #f5f4f8; border-top: 1px solid #dcdce0; border-bottom: 2px solid #acacb0; display: flex; align-items: center; padding: 0 20px 1px 16px; gap: 10.500px; }
.actions button { height: 28px; border: 1px solid #2468a9; background: #2e75bb; color: #fff; border-radius: 3px; font: 11.200px "Liberation Sans", sans-serif; padding: 0; white-space: nowrap; }
.actions .fechar { width: 53px; height: 26px; margin-right: auto; background: #e7e7ea; color: #555; border: 2px solid #222; outline: 1px solid #aaa; }
.actions .b1 { width: 100px; background: #fff; color: #444; border-color: #ccc; }
.b2 { width: 95px; } .b3 { width: 63px; } .b4 { width: 61px; }
.status { height: 26px; background: linear-gradient(#f5f4f8 18px, #ececed 18px); font-size: 8.350px; line-height: 20px; color: #444; display: flex; padding-left: 6px; }
.s1 { width: 179px; } .s2 { width: 106px; }
.w10 { height: 38px; background: #3f1a1b; border-top: 1px solid #c8402f; display: flex; color: #fff; font-family: "Open Sans", sans-serif; overflow: hidden; }
.w10 > div { display: flex; align-items: center; justify-content: center; flex: none; padding-bottom: 6px; }
.w10 .start { width: 56px; }
.start svg { width: 20px; height: 20px; }
.w10 .search { width: 398px; height: 36px; background: #f2f1f1; color: #3a3a3a; justify-content: flex-start; padding: 0 0 4px 14px; font-size: 16.300px; }
.search svg { width: 19px; height: 19px; margin-right: 13px; color: #222; }
.w10 .wide { width: 57px; }
.wide svg { width: 21px; height: 21px; }
.w10 .app { width: 47.100px; position: relative; }
.app svg { width: 24px; height: 24px; }
.app svg.big { width: 28px; height: 28px; }
.app.run { background: linear-gradient(#7ba5d6, #7ba5d6) 50% 100% / 37px 2px no-repeat; }
.app.o { background: #b9651c; border-right: 1px solid #3f1a1b; border-bottom: 2px solid #f58220; }
.app.g { background: #6b5053; border-bottom: 2px solid #8db4e0; border-right: 1px solid #3f1a1b; }
.app em { position: absolute; right: 8px; top: 14px; font: bold 11px "Liberation Sans", sans-serif; }
.w10 .scroll { width: 20px; margin-left: 2px; background: #f0f0f0; color: #222; flex-direction: column; justify-content: space-between; padding: 1px 0 5px; }
.scroll svg { width: 11px; height: 10px; stroke-width: 2; }
.w10 .sun { width: 40px; margin-left: 21px; }
.sun svg { width: 24px; height: 24px; }
.temp { width: 38px; font-size: 15.500px; letter-spacing: -.5px; }
.w10 .tray { margin-left: 12px; }
.tray svg { width: 18px; height: 18px; margin: 0 5px; }
.tray svg:first-child { width: 14px; margin: 0 7px; }
.w10 .two { flex-direction: column; font-size: 13.200px; line-height: 21px; justify-content: flex-start; padding: 0; margin-top: -6px; letter-spacing: -.25px; }
.w10 .lang { width: 40px; }
.w10 .clock { width: 86px; margin-left: 2px; }
.w10 .note { width: 47px; border-right: 0; } .note svg { width: 20px; height: 20px; }

.people { height: 94px; background: #1a1919; display: flex; justify-content: flex-end; gap: 7px; padding-right: 6px; }
.p1 { width: 180px; background: radial-gradient(circle at 50% 50%, #5e5c95 0, #4a485f 36%, #3b3a46 68%); display: flex; align-items: center; justify-content: center; }
.p1 i { width: 54px; height: 54px; border-radius: 50%; border: 4px solid #8f8ee8; background: #e7e1f2; box-shadow: inset 0 0 0 1.500px #34335a; font-size: 17.500px; font-weight: 600; line-height: 45px; text-align: center; color: #4b4763; letter-spacing: -.5px; }
.p2 { width: 167px; }
.p2 svg { width: 167px; height: 94px; overflow: hidden; }

/* desktop taskbar */
.w11 { height: 48px; background: linear-gradient(90deg, #e0ecf5, #dce5f4 30%, #d7def1 55%, #dfe9f5 85%); display: flex; align-items: center; color: #222; }
.dock { display: flex; padding-left: 609px; }
.dock a { width: 44px; height: 48px; display: flex; align-items: center; justify-content: center; position: relative; }
.dock svg { width: 24px; height: 24px; }
.dock .dot::after, .dock .on::after { content: ""; position: absolute; bottom: 5px; width: 6px; height: 3px; border-radius: 2px; background: #7a7f89; }
.dock .on::after { width: 16px; background: #1171c9; }
.dock .on { background: linear-gradient(#f1f4fb, #f1f4fb) 50% 50% / 37px 38px no-repeat; }
.dock em { position: absolute; right: 5px; top: 7px; width: 16px; height: 16px; border-radius: 50%; background: #e51414; color: #fff; font-size: 10px; line-height: 16px; text-align: center; }
.systray { margin-left: auto; display: flex; align-items: center; padding-right: 20px; }
.systray > svg { width: 16px; height: 16px; }
.systray .y1 { width: 12px; height: 12px; } .y2 { margin-left: 10px; } .y3 { margin-left: 12px; } .y4 { margin-left: 16px; } .y5 { margin-left: 8px; }
.when { width: 75px; display: flex; flex-direction: column; align-items: flex-end; font-size: 11.200px; line-height: 16px; letter-spacing: -.05px; padding-bottom: 1px; }
.systray i { width: 16px; height: 16px; border-radius: 50%; background: #0878d0; color: #fff; font-size: 10.500px; line-height: 16px; text-align: center; margin-left: 8px; }
```
